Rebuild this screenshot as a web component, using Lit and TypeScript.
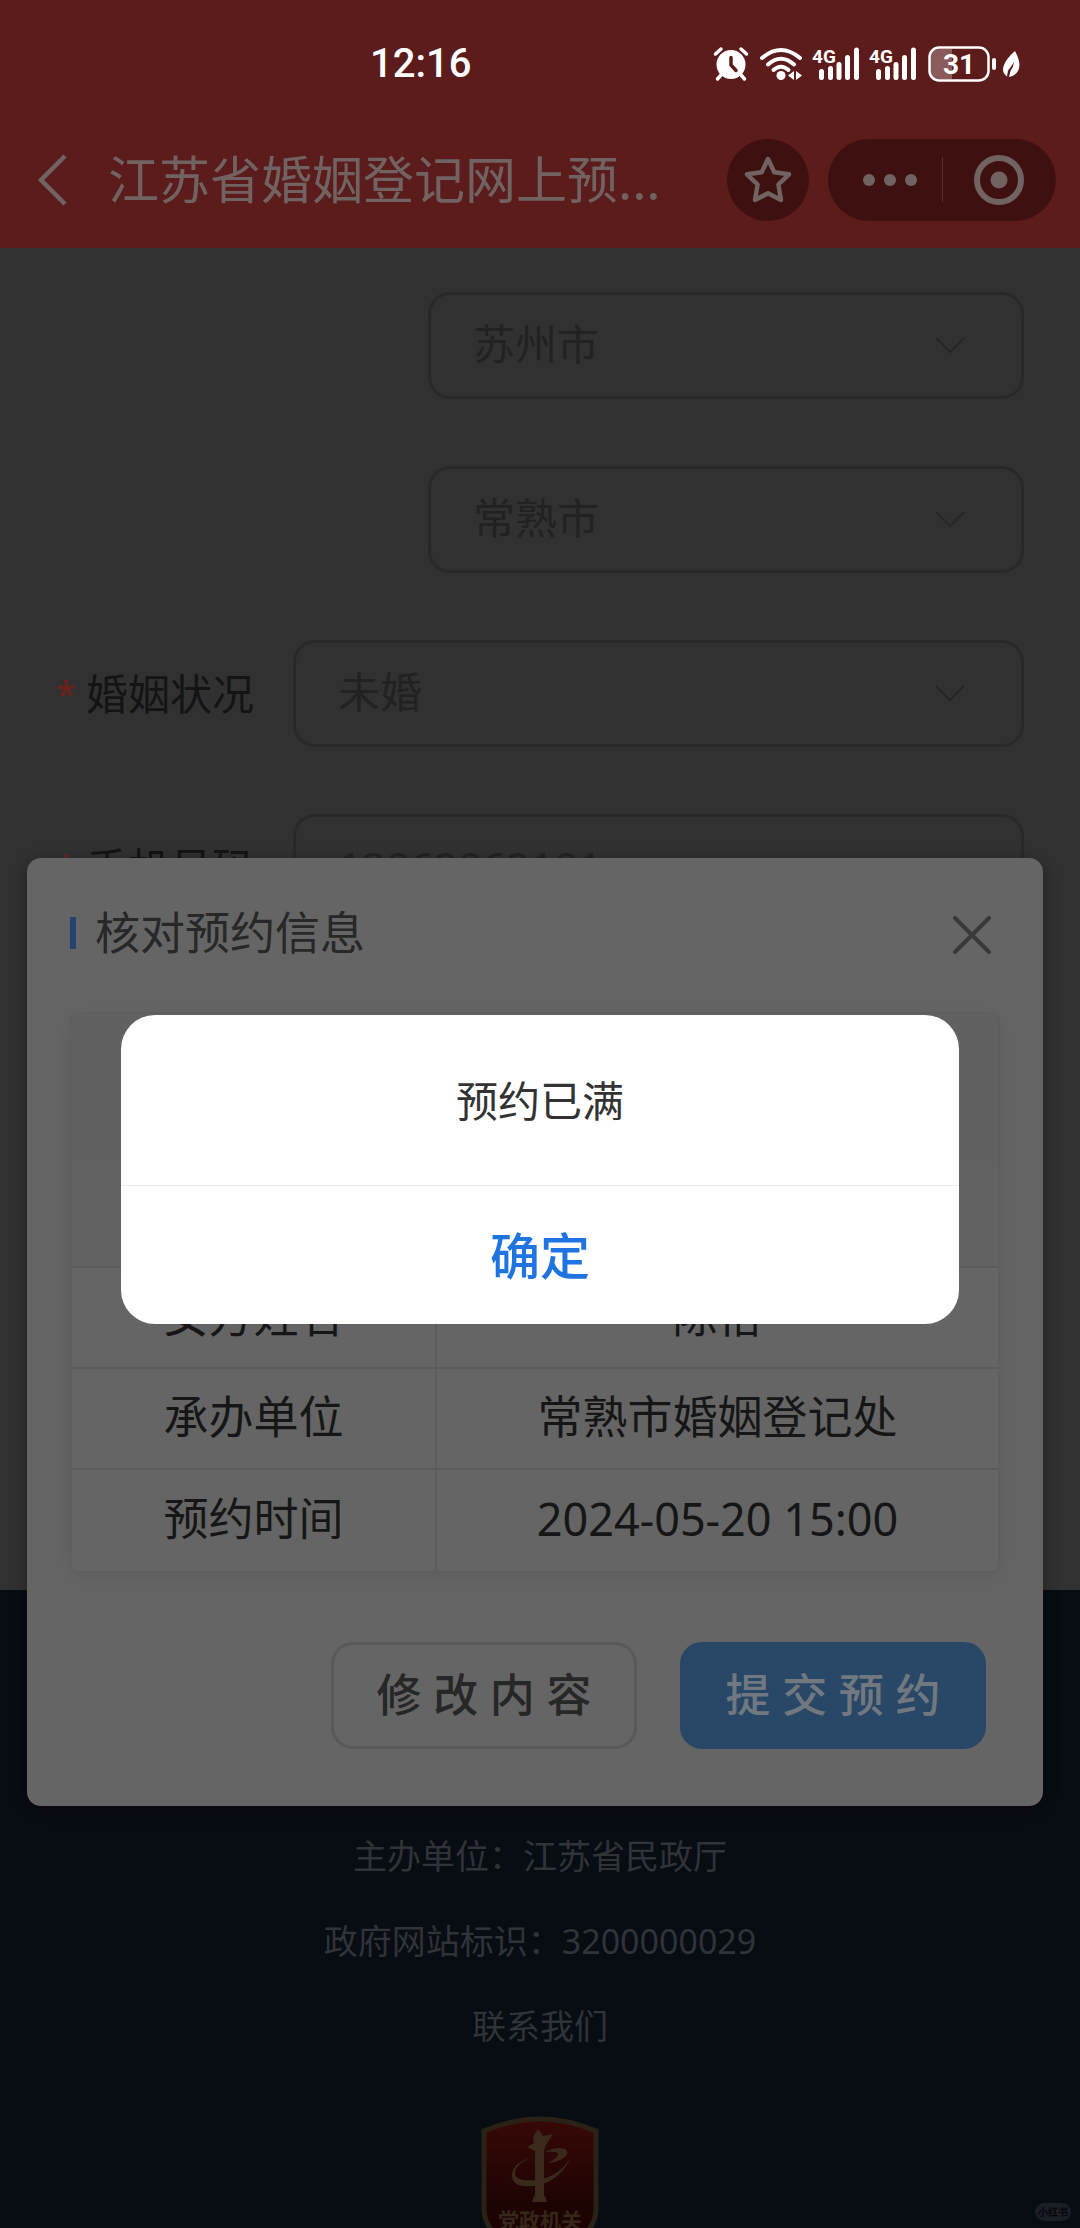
import { LitElement, html, css, svg } from "lit";
import { customElement, property } from "lit/decorators.js";

const signal = () => svg`
  <svg class="signal" viewBox="0 0 47 34" aria-hidden="true">
    <text x="-1" y="16" class="net">4G</text>
    <g fill="currentColor">
      <rect x="6" y="22" width="5" height="11" rx="2.5" />
      <rect x="15" y="19" width="5" height="14" rx="2.5" />
      <rect x="23.5" y="15" width="5" height="18" rx="2.5" />
      <rect x="32" y="8" width="5" height="25" rx="2.5" />
      <rect x="41" y="0.5" width="5" height="32.5" rx="2.5" />
    </g>
  </svg>`;

@customElement("status-bar")
class StatusBar extends LitElement {
  static styles = css`
    :host { display: block; color: #fff; }
    .bar { height: 111px; display: flex; align-items: center; padding: 16px 59px 0 370px; box-sizing: border-box; }
    .time { font-size: 40px; line-height: 48px; font-weight: 500; font-family: "Roboto", sans-serif; }
    .icons { margin-left: auto; display: flex; align-items: center; gap: 10px; }
    svg { display: block; flex: none; }
    .alarm { width: 36px; height: 36px; }
    .wifi { width: 44px; height: 34px; }
    .signal { width: 47px; height: 34px; overflow: visible; }
    .net { font: 700 19px "Roboto", sans-serif; fill: #fff; }
    .battery { width: 94px; height: 38px; }
    .level { font: 700 28px "Roboto", sans-serif; fill: #fff; text-anchor: middle; }
  `;
  render() {
    return html`<div class="bar">
      <time class="time">12:16</time>
      <div class="icons">
        <svg class="alarm" viewBox="0 0 36 36" aria-hidden="true">
          <circle cx="18" cy="18.5" r="14.5" fill="#fff" />
          <path d="M2.5 8 8 3M33.5 8 28 3M8 29l-3.5 4M28 29l3.5 4" stroke="#fff" stroke-width="3.5" stroke-linecap="round" />
          <path d="M18 11.5v7.5l5 5.5" fill="none" stroke="#5c1c1c" stroke-width="3.5" stroke-linecap="round" />
        </svg>
        <svg class="wifi" viewBox="0 0 44 34" aria-hidden="true">
          <g fill="none" stroke="#fff" stroke-width="4" stroke-linecap="round">
            <path d="M3 11Q22-5 41 11" /><path d="M9 17.5Q22 6 35 17.5" /><path d="M14.5 23Q22 16.5 29.5 23" />
          </g>
          <circle cx="22" cy="28.5" r="4.5" fill="#fff" />
          <path d="M35 24v9l-6-4.5zM37 24v9l6-4.5z" fill="#fff" />
        </svg>
        ${signal()} ${signal()}
        <svg class="battery" viewBox="0 0 94 38" aria-hidden="true">
          <path d="M12 4h13v30H12q-9 0-9-9V13q0-9 9-9z" fill="#8b5a5a" />
          <rect x="2.5" y="2.5" width="59" height="33" rx="9.5" fill="none" stroke="#fff" stroke-width="2.5" />
          <rect x="65" y="13" width="4" height="12" rx="2" fill="#fff" />
          <text x="32" y="29" class="level">31</text>
          <path d="M88 6Q95 19 91 26q-3 5-9 6l1.5-6q3-4 3.5-9-3 5-6 8.500l-1 6Q74 27 77 20q2-6 11-14z" fill="#fff" />
        </svg>
      </div>
    </div>`;
  }
}

@customElement("nav-header")
class NavHeader extends LitElement {
  static styles = css`
    :host { display: block; color: #706362; }
    .nav { display: flex; align-items: center; height: 137px; box-sizing: border-box; padding: 0 24px 0 34px; }
    button { border: 0; padding: 0; background: none; color: inherit; display: flex; align-items: center; justify-content: center; }
    .back { width: 36px; height: 60px; }
    h1 { flex: 1; min-width: 0; margin: 0 0 0 38px; padding-bottom: 6px; font-size: 51px; line-height: 64px; font-weight: 400; white-space: nowrap; font-family: "Noto Sans CJK SC", sans-serif; }
    .star { width: 82px; height: 82px; border-radius: 50%; background: #3e1110; }
    .capsule { display: flex; align-items: center; width: 228px; height: 82px; margin-left: 19px; border-radius: 41px; background: #3e1110; }
    .capsule button { flex: 1 1 50%; box-sizing: border-box; height: 82px; }
    .capsule .more { padding-left: 10px; }
    .line { width: 1px; height: 45px; background: #5a2d2c; }
    svg { display: block; }
  `;
  render() {
    return html`<nav class="nav">
      <button class="back" aria-label="返回"><svg width="36" height="56" viewBox="0 0 36 56"><path d="M31 4 7 28l24 24" fill="none" stroke="currentColor" stroke-width="4.5" /></svg></button>
      <h1>江苏省婚姻登记网上预...</h1>
      <button class="star" aria-label="收藏"><svg width="52" height="52" viewBox="0 0 52 52"><path d="M26 5l6.3 13.3 14.7 2-10.6 10.2 2.6 15.5L26 39.3 13 46l2.6-15.5L5 20.3l14.7-2z" fill="none" stroke="currentColor" stroke-width="4.5" stroke-linejoin="round" /></svg></button>
      <div class="capsule">
        <button class="more" aria-label="更多"><svg width="58" height="14" viewBox="0 0 58 14" fill="currentColor"><circle cx="8" cy="7" r="6" /><circle cx="29" cy="7" r="6" /><circle cx="50" cy="7" r="6" /></svg></button>
        <span class="line"></span>
        <button aria-label="关闭小程序"><svg width="52" height="52" viewBox="0 0 52 52"><circle cx="26" cy="26" r="22" fill="none" stroke="currentColor" stroke-width="6" /><circle cx="26" cy="26" r="8.5" fill="currentColor" /></svg></button>
      </div>
    </nav>`;
  }
}

const fieldLabel = css`
  label { width: 237px; flex: none; display: flex; align-items: center; gap: 12px; font-size: 42px; line-height: 56px; color: #141414; }
  .mark { width: 18px; color: #6a221e; font-family: "Noto Sans", sans-serif; font-size: 36px; line-height: 56px; font-weight: 600; }
`;

@customElement("select-field")
class SelectField extends LitElement {
  @property() label = "";
  @property() value = "";
  static styles = [fieldLabel, css`
    :host { display: block; }
    .row { display: flex; align-items: center; }
    .box { flex: 1; min-width: 0; display: grid; align-items: center; }
    .indent { margin-left: 372px; }
    select { grid-area: 1 / 1; width: 100%; height: 107px; box-sizing: border-box; appearance: none; border: 3px solid #292929; border-radius: 22px; background: transparent; color: #222; padding: 0 42px 4px; font: inherit; font-size: 42px; }
    svg { grid-area: 1 / 1; justify-self: end; margin: 0 58px 2px 0; pointer-events: none; }
  `];
  render() {
    return html`<div class="row">
      ${this.label ? html`<label for="field"><span class="mark">*</span>${this.label}</label>` : ""}
      <div class="box ${this.label ? "" : "indent"}">
        <select id="field" aria-label=${this.label || this.value}><option>${this.value}</option></select>
        <svg width="32" height="20" viewBox="0 0 32 20"><path d="M2 3l14 14L30 3" fill="none" stroke="#272727" stroke-width="2" /></svg>
      </div>
    </div>`;
  }
}

@customElement("confirm-dialog")
class ConfirmDialog extends LitElement {
  @property({ attribute: false }) rows: string[][] = [];
  static styles = css`
    :host { display: block; }
    .dialog { background: #656565; border-radius: 14px; box-shadow: 0 4px 16px rgba(0, 0, 0, 0.3); padding: 44px 43px 57px; }
    header { display: flex; align-items: center; justify-content: space-between; height: 62px; padding-right: 3px; }
    h2 { display: flex; align-items: center; gap: 19px; margin: 0; font-size: 45px; line-height: 60px; font-weight: 400; color: #282828; }
    h2::before { content: ""; width: 6px; height: 32px; background: #22446e; }
    .close { border: 0; background: none; padding: 4px 0 0; width: 50px; height: 54px; display: flex; align-items: center; justify-content: center; }
    table { width: 100%; margin-top: 48px; border-collapse: separate; border-spacing: 0; table-layout: fixed; border: 2px solid #5e5f5f; border-radius: 8px; box-shadow: 0 4px 20px rgba(0, 0, 0, 0.08); font-size: 45px; color: #161616; }
    .key { width: 365px; }
    thead th { height: 153px; padding: 0; background: #616161; }
    td, tbody th { height: 101px; padding: 0 0 3px; box-sizing: border-box; line-height: 60px; text-align: center; font-weight: 400; border-bottom: 2px solid #5a5b5c; }
    tbody th { border-right: 2px solid #5c5d5d; }
    tbody .plain { border-right-color: transparent; background: #626262; }
    tbody tr:last-child > * { border-bottom: 0; }
    .actions { display: flex; justify-content: flex-end; gap: 43px; padding-right: 14px; margin-top: 69px; }
    .actions button { width: 306px; height: 107px; border-radius: 22px; border: 3px solid #58595a; background: none; color: #262727; font: inherit; font-size: 45px; font-weight: 500; padding: 0 0 7px; }
    .actions .submit { border-color: #294867; background: #294867; color: #727880; }
  `;
  render() {
    return html`<section class="dialog" role="dialog" aria-labelledby="title">
      <header>
        <h2 id="title">核对预约信息</h2>
        <button class="close" aria-label="关闭"><svg width="44" height="44" viewBox="0 0 44 44"><path d="M5 5l34 34M39 5L5 39" stroke="#393939" stroke-width="4" stroke-linecap="round" /></svg></button>
      </header>
      <table>
        <colgroup><col class="key" /><col /></colgroup>
        <thead><tr><th colspan="2"></th></tr></thead>
        <tbody>
          ${this.rows.map(([k, v]) => html`<tr><th scope="row" class=${k ? "" : "plain"}>${k}</th><td class=${k ? "" : "plain"}>${v}</td></tr>`)}
        </tbody>
      </table>
      <div class="actions">
        <button type="button">修 改 内 容</button>
        <button type="button" class="submit">提 交 预 约</button>
      </div>
    </section>`;
  }
}

@customElement("alert-box")
class AlertBox extends LitElement {
  static styles = css`
    :host { display: block; }
    .alert { background: #fefefe; border-radius: 34px; overflow: hidden; text-align: center; }
    p { margin: 0; padding: 56px 40px 54px; font-size: 42px; line-height: 60px; color: #333; border-bottom: 1px solid #ececec; }
    button { display: block; width: 100%; height: 138px; border: 0; background: none; padding: 0 0 4px; font: inherit; font-size: 50px; font-weight: 500; color: #1f74e2; }
  `;
  render() {
    return html`<section class="alert" role="alertdialog" aria-label="预约已满"><p>预约已满</p><button type="button">确定</button></section>`;
  }
}

@customElement("app-root")
class AppRoot extends LitElement {
  static styles = [fieldLabel, css`
    :host { display: block; font-family: "Noto Sans", "Noto Sans CJK SC", sans-serif; }
    .screen { position: relative; height: 100vh; overflow: hidden; background: #313131; display: flex; flex-direction: column; }
    .top { background: #5c1c1c; flex: none; }
    .form { flex: none; padding: 44px 56px 669px; display: grid; gap: 67px; }
    .phone { display: flex; align-items: center; font-size: 42px; }
    .phone input { flex: 1; min-width: 0; height: 107px; box-sizing: border-box; border: 3px solid #292929; border-radius: 22px; background: none; color: #222; padding: 0 42px 2px; font: inherit; }
    footer { flex: none; background: #080c13; color: #303338; text-align: center; font-size: 34px; line-height: 50px; padding-top: 241px; display: grid; gap: 35px; justify-items: center; }
    footer p { margin: 0; }
    footer a { color: inherit; text-decoration: none; }
    .badge { display: block; margin-top: 30px; }
    .badge text { font: 700 21px "Noto Sans CJK SC", sans-serif; fill: #35281a; text-anchor: middle; }
    .layer { position: absolute; inset: 0; }
    .dialog-layer { padding: 858px 37px 0 27px; }
    .alert-layer { padding: 111px 121px 0; display: grid; align-items: center; }
    .watermark { position: absolute; right: 9px; bottom: 7px; padding: 0 3px; border-radius: 9px; background: #1b1e24; color: #05070b; font-size: 10px; line-height: 18px; font-weight: 700; }
  `];
  render() {
    return html`<main class="screen">
      <div class="top"><status-bar></status-bar><nav-header></nav-header></div>
      <form class="form">
        <select-field value="苏州市"></select-field>
        <select-field value="常熟市"></select-field>
        <select-field label="婚姻状况" value="未婚"></select-field>
        <div class="phone"><label for="phone"><span class="mark">*</span>手机号码</label><input id="phone" type="tel" value="13862862181" /></div>
      </form>
      <footer>
        <p>主办单位：江苏省民政厅</p>
        <p>政府网站标识：3200000029</p>
        <a href="#contact">联系我们</a>
        <svg class="badge" width="118" height="148" viewBox="0 0 118 148" role="img" aria-label="党政机关">
          <defs><linearGradient id="red" x1="0" y1="0" x2="0" y2="1"><stop offset="0" stop-color="#380906" /><stop offset="0.6" stop-color="#1d0403" /></linearGradient></defs>
          <path d="M3 15Q59-9 115 15v78q0 30-56 52Q3 123 3 93z" fill="url(#red)" stroke="#2a2117" stroke-width="5" />
          <g fill="#3a2a1c">
            <path d="M51 86l2-6h1V35l-8-4 7-4-1-6 5-8 5 7 10-2-7 11-2 6v45h1l2 6z" />
            <path d="M54 41Q34 47 34 57q0 9 22 7 22-3 35-24-11 23-32 29-28 5-28-10 0-13 23-18z" />
            <path d="M64 36q12-6 20-3 6 4-3 10-8 4-14 4 8-4 10-8t-13-3z" />
          </g>
          <text x="59" y="112">党政机关</text>
        </svg>
      </footer>
      <div class="layer dialog-layer"><confirm-dialog .rows=${[["", ""], ["女方姓名", "陈怡"], ["承办单位", "常熟市婚姻登记处"], ["预约时间", "2024-05-20 15:00"]]}></confirm-dialog></div>
      <div class="layer alert-layer"><alert-box></alert-box></div>
      <span class="watermark">小红书</span>
    </main>`;
  }
}
